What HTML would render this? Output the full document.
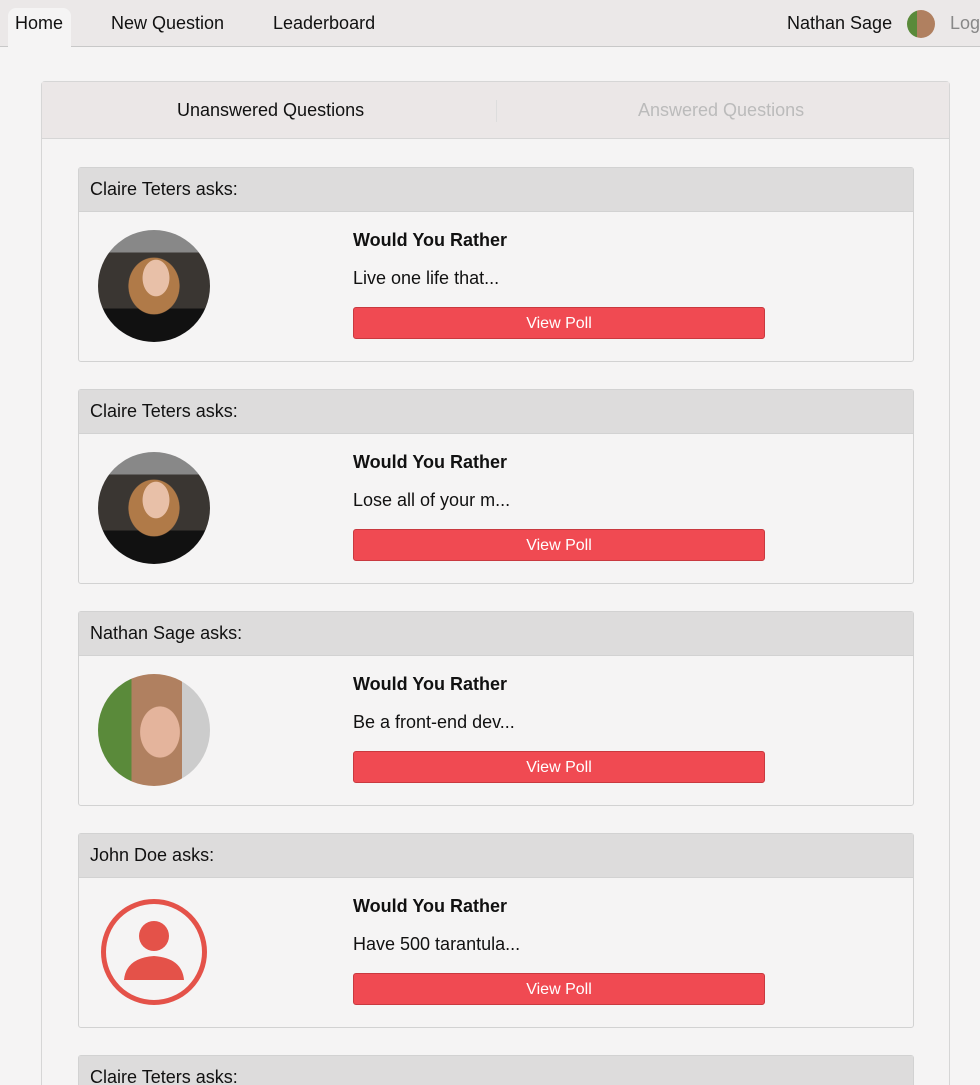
<!DOCTYPE html>
<html style="overflow:hidden"><head><style>
body{margin:0;width:980px;height:1085px;overflow:hidden;background:#f5f4f4;font-family:"Liberation Sans",sans-serif;color:#111;position:relative}
.nav{position:absolute;left:0;top:0;width:980px;height:46px;background:#ebe8e8;border-bottom:1px solid #c8c8c8}
.nav span{position:absolute;top:13px;font-size:18px}
.home{position:absolute;left:8px;top:8px;width:63px;height:39px;background:#f5f4f4;border-radius:8px 8px 0 0}
.panel{position:absolute;left:41px;top:81px;width:907px;height:1100px;border:1px solid #d6d6d6;border-radius:4px;background:#f5f4f4}
.tabs{height:56px;background:#ebe7e7;border-bottom:1px solid #d6d6d6;position:relative}
.tabs span{position:absolute;top:18px;font-size:18px}
.card{position:absolute;left:78px;width:834px;height:193px;border:1px solid #d2d2d2;border-radius:3px;background:#f5f4f4}
.hd{height:43px;background:#dddcdc;border-bottom:1px solid #d2d2d2;font-size:18px;line-height:42px;padding-left:11px}
.av{position:absolute;left:19px;top:62px;width:112px;height:112px;border-radius:50%;overflow:hidden}
.t{position:absolute;left:274px;top:62px;font-weight:bold;font-size:18px}
.q{position:absolute;left:274px;top:100px;font-size:18px}
.b{position:absolute;left:274px;top:139px;width:410px;height:30px;background:#f04a52;border:1px solid #c9393f;border-radius:3px;color:#fff;font-size:16px;text-align:center;line-height:32px}
.w{background:radial-gradient(ellipse 22px 30px at 58px 48px,#e8c0a8 60%,transparent 62%),radial-gradient(ellipse 36px 40px at 56px 56px,#b07a48 70%,transparent 72%),linear-gradient(#888 0 20%,#3a3632 20% 70%,#111 70%)}
.n{background:radial-gradient(ellipse 28px 36px at 62px 58px,#e4b49c 70%,transparent 72%),linear-gradient(90deg,#5a8a3a 0 30%,#b08060 30% 75%,#ccc 75%)}
.j{background:#f5f4f4;border:5px solid #e45249;box-sizing:border-box;width:106px;height:106px;left:22px;top:65px}
</style></head><body>
<div class="nav"><div class="home"></div>
<span style="left:15px">Home</span><span style="left:111px">New Question</span><span style="left:273px">Leaderboard</span>
<span style="left:787px">Nathan Sage</span>
<div style="position:absolute;left:907px;top:10px;width:28px;height:28px;border-radius:50%;background:linear-gradient(90deg,#5a8a3a 0 35%,#b08060 35%)"></div>
<span style="left:950px;color:#888">Log</span></div>
<div class="panel"><div class="tabs">
<span style="left:135px">Unanswered Questions</span>
<div style="position:absolute;left:454px;top:18px;width:1px;height:22px;background:#ddd"></div>
<span style="left:596px;color:#bbb">Answered Questions</span></div></div>

<div class="card" style="top:167px"><div class="hd">Claire Teters asks:</div><div class="av w"></div><div class="t">Would You Rather</div><div class="q">Live one life that...</div><div class="b">View Poll</div></div>
<div class="card" style="top:389px"><div class="hd">Claire Teters asks:</div><div class="av w"></div><div class="t">Would You Rather</div><div class="q">Lose all of your m...</div><div class="b">View Poll</div></div>
<div class="card" style="top:611px"><div class="hd">Nathan Sage asks:</div><div class="av n"></div><div class="t">Would You Rather</div><div class="q">Be a front-end dev...</div><div class="b">View Poll</div></div>
<div class="card" style="top:833px"><div class="hd">John Doe asks:</div><div class="av j"><svg width="96" height="96" viewBox="0 0 96 96"><circle cx="48" cy="32" r="15" fill="#e45249"/><path d="M18 76 Q20 54 48 52 Q76 54 78 76 Z" fill="#e45249"/></svg></div><div class="t">Would You Rather</div><div class="q">Have 500 tarantula...</div><div class="b">View Poll</div></div>
<div class="card" style="top:1055px"><div class="hd">Claire Teters asks:</div></div>
</body></html>
